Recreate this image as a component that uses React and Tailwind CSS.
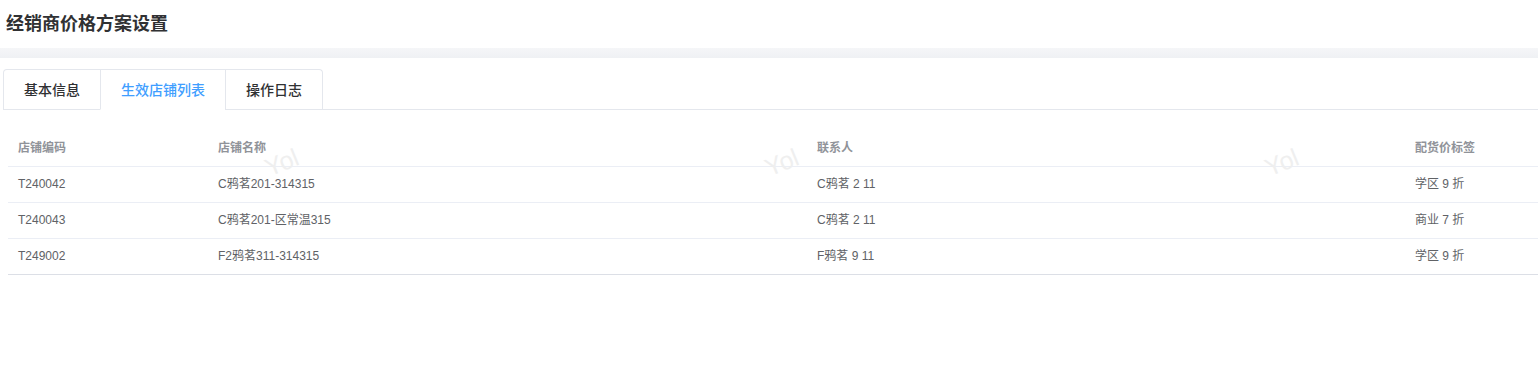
import React from "react";

const rows = [
    { code: "T240042", name: "C鸦茗201-314315", contact: "C鸦茗 2 11", tag: "学区 9 折" },
    { code: "T240043", name: "C鸦茗201-区常温315", contact: "C鸦茗 2 11", tag: "商业 7 折" },
    { code: "T249002", name: "F2鸦茗311-314315", contact: "F鸦茗 9 11", tag: "学区 9 折" },
];

const tabs = ["基本信息", "生效店铺列表", "操作日志"];

const App = () => {
    const active = 1;

    return (
        <div className="min-h-screen bg-white text-[#333] font-['Liberation_Sans','Noto_Sans_CJK_SC',sans-serif]">
            {/* Page title */}
            <div className="h-12 flex items-center px-[6px]">
                <h1 className="text-lg font-bold text-[#303133]">经销商价格方案设置</h1>
            </div>
            <div className="h-[10px] bg-gradient-to-b from-[#f5f6f8] to-[#eff1f4]" />

            {/* Tabs */}
            <div className="mt-[11px] ml-[3px] flex border-b border-[#e4e7ed]">
                <div className="flex border border-b-0 border-[#e4e7ed] rounded-t">
                    {tabs.map((t, i) => (
                        <div key={t}
                            className={`h-10 px-5 flex items-center text-sm font-medium -mb-px ${i > 0 ? "border-l border-[#e4e7ed]" : ""} ${i === active ? "text-[#409eff] bg-white border-b border-b-white" : "text-[#303133]"}`}>
                            {t}
                        </div>
                    ))}
                </div>
            </div>

            {/* Store table */}
            <div className="relative mt-5 ml-2">
                <table className="w-full text-xs border-collapse table-fixed">
                    <colgroup>
                        <col className="w-[200px]" />
                        <col className="w-[599px]" />
                        <col className="w-[598px]" />
                        <col />
                    </colgroup>
                    <thead>
                        <tr className="h-9 border-b border-[#ebeef5] text-left text-[#909399] font-bold">
                            <th className="px-[10px] font-bold">店铺编码</th>
                            <th className="px-[10px] font-bold">店铺名称</th>
                            <th className="px-[10px] font-bold">联系人</th>
                            <th className="px-[10px] font-bold">配货价标签</th>
                        </tr>
                    </thead>
                    <tbody className="text-[#606266]">
                        {rows.map((r, i) => (
                            <tr key={r.code}
                                className={`h-9 border-b ${i === rows.length - 1 ? "border-[#dcdfe6]" : "border-[#ebeef5]"}`}>
                                <td className="px-[10px]">{r.code}</td>
                                <td className="px-[10px]">{r.name}</td>
                                <td className="px-[10px]">{r.contact}</td>
                                <td className="px-[10px]">{r.tag}</td>
                            </tr>
                        ))}
                    </tbody>
                </table>

                {/* Watermarks */}
                <span className="absolute left-[257px] top-[14px] -rotate-[22deg] text-[25px] text-[#efefef] pointer-events-none">Yol</span>
                <span className="absolute left-[757px] top-[14px] -rotate-[22deg] text-[25px] text-[#efefef] pointer-events-none">Yol</span>
                <span className="absolute left-[1257px] top-[14px] -rotate-[22deg] text-[25px] text-[#efefef] pointer-events-none">Yol</span>
            </div>
        </div>
    );
};

export default App;
